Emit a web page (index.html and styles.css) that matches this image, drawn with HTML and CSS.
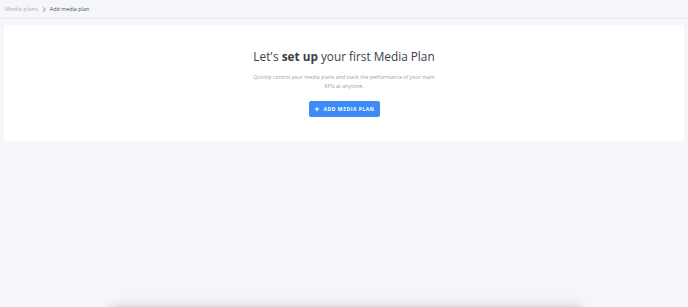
FILE: index.html
```html
<!DOCTYPE html>
<html lang="en">
<head>
    <meta charset="UTF-8">
    <title>Add media plan</title>
    <link rel="stylesheet" href="styles.css">
</head>
<body>

    <!-- Breadcrumb -->
    <div class="topbar">
        <a href="#" class="crumb">Media plans</a>
        <svg class="crumb-sep" viewBox="0 0 8 8"><polyline points="3,1.5 5.5,4 3,6.5"></polyline></svg>
        <span class="crumb current">Add media plan</span>
    </div>

    <div class="page">
        <div class="empty-card">
            <h1>Let's <strong>set up</strong> your first Media Plan</h1>
            <p>Quickly control your media plans and track the performance of your main<br>KPIs at anytime.</p>
            <button class="btn-primary">
                <svg class="plus" viewBox="0 0 8 8"><path d="M4 1v6M1 4h6"></path></svg>
                <span>Add media plan</span>
            </button>
        </div>
    </div>

    <div class="bottom-panel"></div>

</body>
</html>
```

FILE: styles.css
```css
/* --- base --- */
:root {
    --bg-color: #f5f6fa;
    --surface-color: #ffffff;
    --border-color: #e6e8ee;
    --text-primary: #3a3e48;
    --text-secondary: #9a9ea8;
    --primary-color: #3d8bf5;
}
* { margin: 0; padding: 0; box-sizing: border-box; }
html, body { height: 100%; }
body {
    font-family: 'Open Sans', sans-serif;
    background-color: var(--bg-color);
    color: var(--text-primary);
    overflow: hidden;
}

/* --- breadcrumb bar --- */
.topbar {
    height: 19px;
    display: flex;
    align-items: center;
    gap: 3px;
    padding: 0 5px;
    border-bottom: 1px solid var(--border-color);
    font-size: 5.8px;
}
.crumb { color: #a9adb6; text-decoration: none; }
.crumb.current { color: #4a4f5a; font-size: 5.4px; }
.crumb-sep { width: 6px; height: 7px; fill: none; stroke: #5a5f6a; stroke-width: 1; stroke-linecap: round; stroke-linejoin: round; }

/* --- card --- */
.page { padding: 6px 4px; }
.empty-card {
    background-color: var(--surface-color);
    border-radius: 2px;
    height: 116px;
    display: flex;
    flex-direction: column;
    align-items: center;
    padding-top: 23px;
    text-align: center;
}
.empty-card h1 {
    font-size: 11.8px;
    font-weight: 400;
    color: var(--text-primary);
    line-height: 16px;
}
.empty-card h1 strong { font-weight: 700; }
.empty-card p {
    margin-top: 9px;
    font-size: 5.3px;
    line-height: 8.5px;
    color: var(--text-secondary);
}
.btn-primary {
    margin-top: 11px;
    width: 71px;
    height: 16px;
    border: none;
    border-radius: 2px;
    background-color: var(--primary-color);
    color: #fff;
    font-family: 'Open Sans', sans-serif;
    font-size: 5px;
    font-weight: 700;
    letter-spacing: 0.55px;
    text-transform: uppercase;
    display: flex;
    align-items: center;
    justify-content: center;
    gap: 4px;
}
.btn-primary .plus { width: 6px; height: 6px; fill: none; stroke: #fff; stroke-width: 1.3; }

/* --- panel peeking from bottom edge --- */
.bottom-panel {
    position: fixed;
    left: 112px;
    right: 108px;
    top: 310px;
    height: 40px;
    background: #fff;
    box-shadow: 0 0 12px rgba(20, 30, 60, 0.35);
}
```
